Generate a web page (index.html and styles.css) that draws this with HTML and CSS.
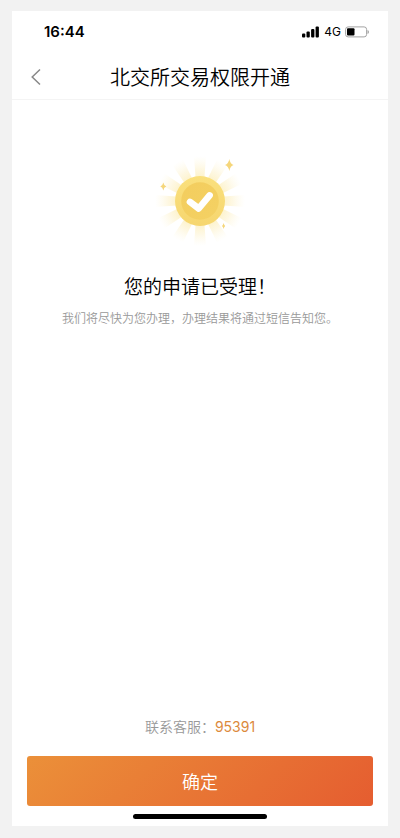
FILE: index.html
```html
<!DOCTYPE html>
<html lang="zh-CN">
<head>
<meta charset="utf-8">
<meta name="viewport" content="width=device-width, initial-scale=1">
<title>北交所交易权限开通</title>
<link rel="stylesheet" href="styles.css">
</head>
<body>
<div class="screen">
  <div class="status">
    <span class="time">16:44</span>
    <div class="indicators">
      <svg class="signal" width="18" height="12" viewBox="0 0 18 12" aria-hidden="true">
        <rect x="0" y="7.5" width="3.300" height="4" rx="1"/>
        <rect x="4.500" y="5.500" width="3.300" height="6" rx="1"/>
        <rect x="9.100" y="3" width="3.300" height="8.500" rx="1"/>
        <rect x="13.600" y="0.500" width="3.300" height="11" rx="1"/>
      </svg>
      <span class="network">4G</span>
      <svg width="25" height="12" viewBox="0 0 25 12" aria-hidden="true">
        <rect x="0.600" y="0.900" width="21" height="10" rx="2.500" fill="#fff" stroke="#a3a3a3"/>
        <rect x="2" y="2.300" width="7.500" height="7.200" rx="1"/>
        <path d="M22.500 4v4q1.500-.7 1.500-2t-1.500-2z" fill="#a3a3a3"/>
      </svg>
    </div>
  </div>
  <header class="header">
    <button class="back" type="button" aria-label="返回">
      <svg width="10" height="18" viewBox="0 0 10 18" aria-hidden="true"><path d="M9 1.500 1.200 9 9 16.500" fill="none" stroke="#888" stroke-width="1.500"/></svg>
    </button>
    <h1 class="title">北交所交易权限开通</h1>
  </header>
  <main class="result">
    <svg class="badge" width="100" height="100" viewBox="-50 -50 100 100" aria-hidden="true">
      <defs>
        <radialGradient id="glow" gradientUnits="userSpaceOnUse" cx="0" cy="0" r="45">
          <stop offset=".5" stop-color="#fcedb4" stop-opacity=".75"/>
          <stop offset=".72" stop-color="#fdf3d0" stop-opacity=".6"/>
          <stop offset="1" stop-color="#fef8df" stop-opacity="0"/>
        </radialGradient>
        <linearGradient id="rim" x1="0" y1="0" x2="0" y2="1">
          <stop offset="0" stop-color="#fae07d"/><stop offset="1" stop-color="#f6d66f"/>
        </linearGradient>
        <linearGradient id="coin" x1="0" y1="0" x2="1" y2="1">
          <stop offset="0" stop-color="#f3cd5e"/><stop offset="1" stop-color="#f4d163"/>
        </linearGradient>
        <path id="ray" d="M20-4.200 45-6V6L20 4.200z"/>
      </defs>
      <g fill="url(#glow)">
        <use href="#ray"/>
        <use href="#ray" transform="rotate(30)"/>
        <use href="#ray" transform="rotate(60)"/>
        <use href="#ray" transform="rotate(90)"/>
        <use href="#ray" transform="rotate(120)"/>
        <use href="#ray" transform="rotate(150)"/>
        <use href="#ray" transform="rotate(180)"/>
        <use href="#ray" transform="rotate(210)"/>
        <use href="#ray" transform="rotate(240)"/>
        <use href="#ray" transform="rotate(270)"/>
        <use href="#ray" transform="rotate(300)"/>
        <use href="#ray" transform="rotate(330)"/>
      </g>
      <circle r="25" fill="url(#rim)"/>
      <circle r="18.800" fill="url(#coin)"/>
      <path d="M-10 .9-1.300 7.500 9.600-5.600" fill="none" stroke="#fff" stroke-width="6.600" stroke-linecap="round" stroke-linejoin="round"/>
      <g fill="#f5d67a">
        <path d="M29.300-42q.9 5 4.300 6-3.400 1-4.300 6-.9-5-4.300-6 3.400-1 4.300-6z"/>
        <path d="M-36.700-18.500q.6 3.300 3 4-2.400.7-3 4-.6-3.300-3-4 2.400-.7 3-4z"/>
        <path d="M23.600 22q.4 2.200 1.600 3-1.200.8-1.600 3-.4-2.200-1.600-3 1.200-.8 1.600-3z"/>
      </g>
    </svg>
    <h2 class="heading">您的申请已受理！</h2>
    <p class="note">我们将尽快为您办理，办理结果将通过短信告知您。</p>
  </main>
  <footer class="footer">
    <p class="contact">联系客服：<a class="phone" href="tel:95391">95391</a></p>
    <button class="confirm" type="button">确定</button>
    <div class="home-bar"></div>
  </footer>
</div>
</body>
</html>
```
FILE: styles.css
```css
* {
  box-sizing: border-box;
}

body {
  display: flex;
  min-height: 100vh;
  margin: 0;
  padding: 11px 12px 12px;
  background: #f2f2f2;
  color: #000;
  font-family: "Noto Sans CJK SC", sans-serif;
}

h1,
h2,
p {
  margin: 0;
  font-weight: 350;
}

button {
  border: 0;
  font-family: inherit;
}

.screen {
  display: flex;
  flex: 1;
  flex-direction: column;
  background: #fff;
}

.status {
  display: flex;
  align-items: center;
  justify-content: space-between;
  height: 41px;
  padding: 0 18px 0 32px;
  font-family: Inter, sans-serif;
}

.time {
  font-size: 15px;
  font-weight: 600;
}

.indicators {
  display: flex;
  align-items: center;
  gap: 4px;
}

.network {
  font-size: 12px;
}

.header {
  display: grid;
  grid-template-columns: 48px 1fr 48px;
  align-items: center;
  height: 48px;
  padding-top: 2px;
  border-bottom: 1px solid #f4f4f4;
}

.back {
  display: flex;
  align-items: center;
  height: 46px;
  padding: 0 0 0 19px;
  background: none;
}

.title {
  font-size: 20px;
  line-height: 28px;
  text-align: center;
}

.result {
  display: flex;
  flex: 1;
  flex-direction: column;
  align-items: center;
  padding-top: 51px;
}

.heading {
  margin-top: 21px;
  font-size: 19px;
  line-height: 28px;
}

.note {
  margin-top: 8px;
  color: #999;
  font-size: 12px;
  line-height: 20px;
}

.footer {
  display: flex;
  flex-direction: column;
  padding: 0 15px 7px;
}

.contact {
  color: #999;
  font-size: 14px;
  line-height: 20px;
  text-align: center;
}

.phone {
  color: #dc8a3c;
  font-family: Inter, sans-serif;
  font-weight: 400;
  text-decoration: none;
}

.confirm {
  height: 50px;
  margin-top: 19px;
  border-radius: 3px;
  background: linear-gradient(135deg, #eb9039, #e55d30);
  color: #fff;
  font-size: 18px;
  font-weight: 350;
}

.home-bar {
  align-self: center;
  width: 134px;
  height: 5px;
  margin-top: 8px;
  border-radius: 3px;
  background: #000;
}
```
